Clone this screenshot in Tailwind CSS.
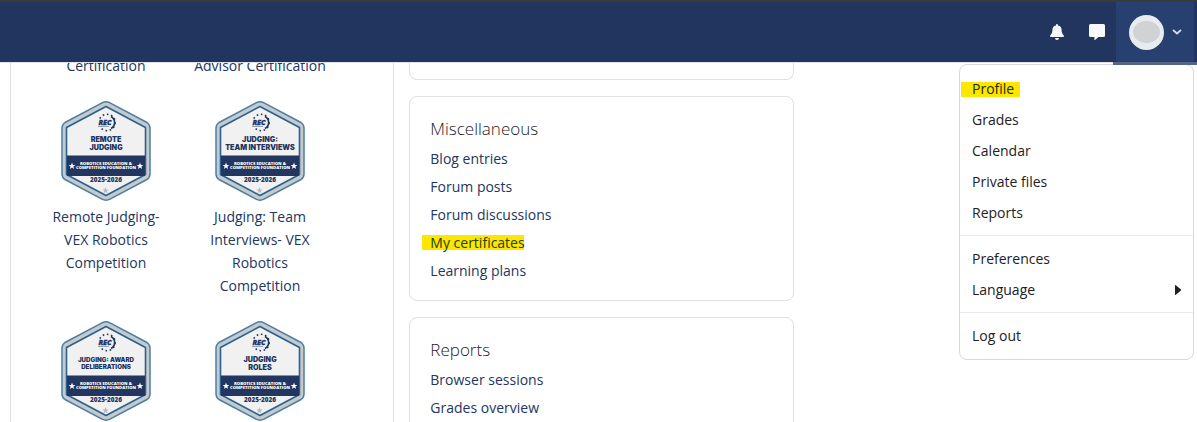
<!DOCTYPE html>
<html lang="en">
<head>
    <meta charset="UTF-8">
    <meta name="viewport" content="width=device-width, initial-scale=1.0">
    <title>Profile</title>
    <script src="https://cdn.jsdelivr.net/npm/@tailwindcss/browser@4"></script>
</head>
<body class="h-screen overflow-hidden bg-white font-['Open_Sans',sans-serif] text-sm text-[#1d2125]">

    <!-- Shared badge artwork -->
    <svg class="hidden" aria-hidden="true">
        <defs>
            <path id="star" d="M0-3.5 .9-1.1 3.4-1 1.4.5 2.1 2.9 0 1.5-2.1 2.9-1.4.5-3.4-1-.9-1.1Z"/>
            <symbol id="badge" viewBox="0 0 90 100">
                <path d="M41 1.8Q45-.2 49 1.8L86 21.5Q89 23.500 89 27V73Q89 76.500 86 78.500L49 98.200Q45 100.200 41 98.200L4 78.500Q1 76.500 1 73V27Q1 23.500 4 21.500Z" fill="#c6cacc" stroke="#4c7fa3" stroke-width="1.500"/>
                <path d="M45 5.500 84.500 26.500V73.500L45 94.500 5.500 73.500V26.500Z" fill="#f1f1f2" stroke="#286292" stroke-width="1.600" stroke-linejoin="round"/>
                <path d="M6 54.500H84V75H6Z" fill="#22365f"/>
                <circle cx="46" cy="21.500" r="8.200" fill="none" stroke="#22365f" stroke-width="1.600" stroke-dasharray="1.500 2.400" pathLength="47"/>
                <path d="M50 15.500A6.800 6.800 0 0 1 50 27.500" fill="none" stroke="#22365f" stroke-width="1.600"/>
                <path d="M36 18H51V25.500H36Z" fill="#f1f1f2"/>
                <text x="44" y="24" text-anchor="middle" font-size="7.200" font-weight="900" font-style="italic" fill="#22365f" stroke="#22365f" stroke-width=".3">REC</text>
                <path d="M37 25.500H48" stroke="#8490a8" stroke-width=".8"/>
                <g fill="#fff" font-size="4.200" font-weight="800" text-anchor="middle">
                    <text x="45" y="63.500">ROBOTICS EDUCATION &amp;</text>
                    <text x="45" y="68.300">COMPETITION FOUNDATION</text>
                    <use href="#star" x="11" y="65"/>
                    <use href="#star" x="79" y="65"/>
                </g>
                <text x="45" y="81.200" text-anchor="middle" font-size="6.400" font-weight="800" fill="#22365f">2025-2026</text>
                <use href="#star" x="44.500" y="89.500" fill="#b9bcc0"/>
            </symbol>
        </defs>
    </svg>

    <header class="relative z-20 flex h-[62px] items-stretch justify-end border-t-2 border-[#3a3a3a] bg-[#22355e] pr-[3px] shadow-[0_1px_0_#dee2e6]">
        <button class="flex w-10 items-center justify-center" aria-label="Notifications">
            <svg class="h-4 w-4" viewBox="0 0 16 16" fill="#f8f9fa"><path d="M8 0a1 1 0 0 0-1 1v.4A4.600 4.600 0 0 0 3.400 6C3.400 8.800 2.500 9.900 1.300 11.400c-.5.700-.2 1.600.7 1.600h12c.9 0 1.200-.9.700-1.600C13.500 9.900 12.600 8.800 12.600 6A4.600 4.600 0 0 0 9 1.400V1a1 1 0 0 0-1-1ZM6 14a2 2 0 0 0 4 0Z"/></svg>
        </button>
        <button class="flex w-[39px] items-center justify-center" aria-label="Messages">
            <svg class="h-4 w-4" viewBox="0 0 16 16" fill="#f8f9fa"><path d="M1.500 0h13A1.500 1.500 0 0 1 16 1.500v10a1.500 1.500 0 0 1-1.500 1.500H9.500l-3.500 3c-.3.200-.6 0-.6-.300V13H1.500A1.500 1.500 0 0 1 0 11.500v-10A1.500 1.500 0 0 1 1.500 0Z"/></svg>
        </button>
        <button class="flex w-[78px] items-center gap-2 bg-[#27406f] pl-[13px]" aria-label="User menu" aria-expanded="true">
            <span class="flex h-[35px] w-[35px] items-center justify-center rounded-full bg-[#e9ecef]">
                <span class="h-[22px] w-[27px] rounded-[50%] bg-[#d0d2d3]"></span>
            </span>
            <svg class="h-[6px] w-[10px]" viewBox="0 0 10 6" fill="none" stroke="#d3d9e2" stroke-width="1.800"><path d="M1 1 5 4.500 9 1"/></svg>
        </button>
        <span class="absolute top-full right-0 h-[3px] w-[84px] bg-[#546688]"></span>
    </header>

    <!-- User menu -->
    <nav class="absolute top-[64px] right-[3px] z-10 w-[235px] rounded-lg border border-[#d5d7d9] bg-white py-2 leading-[23px]">
        <a href="#" class="relative block px-3 py-1"><span class="absolute top-[9px] left-px h-[15px] w-[59px] bg-[#ffe600]"></span><span class="relative text-[#1d2b05]">Profile</span></a>
        <a href="#" class="block px-3 py-1">Grades</a>
        <a href="#" class="block px-3 py-1">Calendar</a>
        <a href="#" class="block px-3 py-1">Private files</a>
        <a href="#" class="block px-3 py-1">Reports</a>
        <hr class="my-[7px] border-[#e6e8ea]">
        <a href="#" class="block px-3 py-1">Preferences</a>
        <a href="#" class="flex items-center justify-between px-3 py-1">Language
            <svg class="h-[10px] w-[6px]" viewBox="0 0 6 10" fill="#1d2125"><path d="M0 .5Q0-.4.8.3L5.700 4.300Q6.300 5 5.700 5.700L.8 9.700Q0 10.400 0 9.500Z"/></svg>
        </a>
        <hr class="my-[7px] border-[#e6e8ea]">
        <a href="#" class="block px-3 py-1">Log out</a>
    </nav>

    <main class="-mt-2 grid grid-cols-3 gap-[15px] pr-1 pl-[10px] text-[#22365f]">
        <!-- Badges -->
        <section class="border-x border-[#dee0e2] px-[18px]">
            <ul class="grid grid-cols-[154px_154px] gap-y-6 text-center leading-[23px]">
                <li class="px-[10px]"><a href="#">Certification</a></li>
                <li class="px-[10px]"><a href="#">Advisor Certification</a></li>
                <li class="px-[10px]">
                    <a href="#">
                        <svg class="mx-auto mb-1 h-[100px] w-[90px]" viewBox="0 0 90 100">
                            <use href="#badge"/>
                            <g class="font-['Inter']" text-anchor="middle" font-size="7.200" font-weight="900" fill="#22365f"><text x="45" y="40.500">REMOTE</text><text x="45" y="49">JUDGING</text></g>
                        </svg>
                        Remote Judging- VEX Robotics Competition
                    </a>
                </li>
                <li class="px-[10px]">
                    <a href="#">
                        <svg class="mx-auto mb-1 h-[100px] w-[90px]" viewBox="0 0 90 100">
                            <use href="#badge"/>
                            <g class="font-['Inter']" text-anchor="middle" font-size="7.200" font-weight="900" fill="#22365f"><text x="45" y="40.500">JUDGING:</text><text x="45" y="49">TEAM INTERVIEWS</text></g>
                        </svg>
                        Judging: Team Interviews- VEX Robotics Competition
                    </a>
                </li>
                <li class="px-[10px]">
                    <a href="#">
                        <svg class="mx-auto mb-1 h-[100px] w-[90px]" viewBox="0 0 90 100">
                            <use href="#badge"/>
                            <g class="font-['Inter']" text-anchor="middle" font-size="6.200" font-weight="900" fill="#22365f"><text x="45" y="41">JUDGING: AWARD</text><text x="45" y="48">DELIBERATIONS</text></g>
                        </svg>
                    </a>
                </li>
                <li class="px-[10px]">
                    <a href="#">
                        <svg class="mx-auto mb-1 h-[100px] w-[90px]" viewBox="0 0 90 100">
                            <use href="#badge"/>
                            <g class="font-['Inter']" text-anchor="middle" font-size="7.200" font-weight="900" fill="#22365f"><text x="45" y="40.500">JUDGING</text><text x="45" y="49">ROLES</text></g>
                        </svg>
                    </a>
                </li>
            </ul>
        </section>

        <!-- Profile sections -->
        <div class="flex flex-col gap-4 leading-7">
            <section class="h-[26px] rounded-b-lg border border-t-0 border-[#dee0e2]"></section>
            <section class="rounded-lg border border-[#dee0e2] p-5 pb-[15px]">
                <h3 class="mb-[5px] text-[17px] leading-[23px] font-light text-[#1d2125]">Miscellaneous</h3>
                <ul>
                    <li><a href="#">Blog entries</a></li>
                    <li><a href="#">Forum posts</a></li>
                    <li><a href="#">Forum discussions</a></li>
                    <li class="relative"><span class="absolute top-[6px] -left-2 h-[15px] w-[102px] bg-[#ffe600]"></span><a href="#" class="relative text-[#22400f]">My certificates</a></li>
                    <li><a href="#">Learning plans</a></li>
                </ul>
            </section>
            <section class="rounded-lg border border-[#dee0e2] p-5 pb-[15px]">
                <h3 class="mb-[5px] text-[17px] leading-[23px] font-light text-[#1d2125]">Reports</h3>
                <ul>
                    <li><a href="#">Browser sessions</a></li>
                    <li><a href="#">Grades overview</a></li>
                </ul>
            </section>
        </div>
    </main>

</body>
</html>
